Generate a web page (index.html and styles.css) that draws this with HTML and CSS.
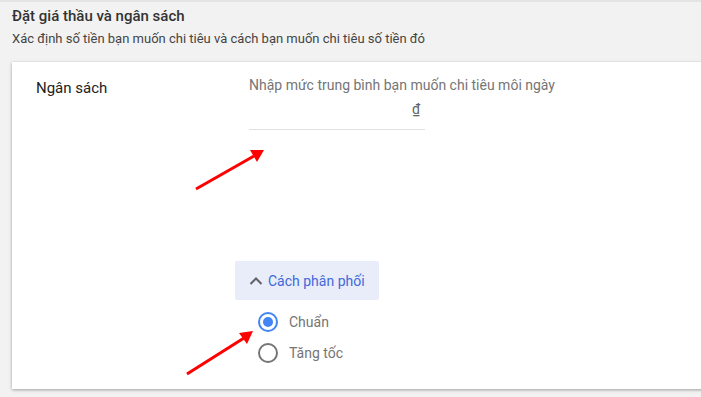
FILE: index.html
```html
<html lang="vi">
    <head>
        <title>Đặt giá thầu và ngân sách</title>
        <link rel="stylesheet" href="styles.css">
    </head>
    <body>
        <div id="page">
            <div class="header">
                <h1>Đặt giá thầu và ngân sách</h1>
                <p>Xác định số tiền bạn muốn chi tiêu và cách bạn muốn chi tiêu số tiền đó</p>
            </div>

            <div class="card">
                <div class="label">Ngân sách</div>
                <div class="field">
                    <div class="hint">Nhập mức trung bình bạn muốn chi tiêu môi ngày</div>
                    <div class="money"><span class="currency">₫</span></div>

                    <div class="delivery">
                        <button class="toggle">
                            <svg width="14" height="14" viewBox="0 0 14 14"><polyline points="1.5,10 7,4.5 12.5,10" fill="none" stroke="#5f6368" stroke-width="2"/></svg>
                            Cách phân phối
                        </button>
                        <div class="options">
                            <label class="radio"><span class="dot checked"></span>Chuẩn</label>
                            <label class="radio"><span class="dot"></span>Tăng tốc</label>
                        </div>
                    </div>
                </div>
            </div>

            <!-- arrows drawn over the screenshot -->
            <svg class="arrows" width="701" height="397">
                <line x1="196" y1="189" x2="254" y2="156" stroke="#ff0000" stroke-width="3"/>
                <polygon points="264,150 250,150 257,162" fill="#ff0000"/>
                <line x1="187" y1="374" x2="244" y2="338" stroke="#ff0000" stroke-width="3"/>
                <polygon points="253,331 239,333 247,344" fill="#ff0000"/>
            </svg>
        </div>
    </body>
</html>
```
FILE: styles.css
```css
body{
    margin:0;
    background:#f2f2f2;
    font-family: Roboto, "Noto Sans", sans-serif;
    overflow:hidden;
}
#page{
    position:relative;
    height:397px;
    border-top:2px solid #e4e4e4;
}
.header{
    padding:4px 12px 0;
    height:56px;
}
h1{
    font-size:15px;
    font-weight:500;
    color:#333;
    margin:0;
    line-height:20px;
}
.header p{
    font-size:13px;
    color:#444;
    margin:4px 0 0;
    line-height:18px;
}
.card{
    margin-left:12px;
    width:720px;
    height:327px;
    background:#fff;
    box-shadow:0 1px 3px rgba(0,0,0,.35);
    display:flex;
}
.label{
    width:213px;
    padding:16px 0 0 24px;
    font-size:15px;
    color:#212121;
    line-height:20px;
}
.field{
    padding-top:14px;
}
.hint{
    font-size:14px;
    color:#757575;
    line-height:18px;
}
.money{
    width:176px;
    height:36px;
    border-bottom:1px solid #e0e0e0;
    text-align:right;
    box-sizing:border-box;
    padding:7px 5px 0 0;
}
.currency{
    font-size:14px;
    color:#616161;
    text-decoration:underline;
}
.delivery{
    margin:131px 0 0 -14px;
}
.toggle{
    display:flex;
    align-items:center;
    gap:5px;
    width:144px;
    height:39px;
    padding:0 0 0 14px;
    border:none;
    border-radius:2px;
    background:#e8edf9;
    color:#4169d9;
    font-family: Roboto, sans-serif;
    font-size:14px;
}
.options{
    padding:6px 0 0 23px;
}
.radio{
    display:flex;
    align-items:center;
    gap:11px;
    height:31px;
    font-size:14px;
    color:#757575;
}
.dot{
    width:16px;
    height:16px;
    border:2px solid #757575;
    border-radius:50%;
    position:relative;
}
.dot.checked{
    border-color:#4285f4;
}
.dot.checked::after{
    content:"";
    position:absolute;
    left:3px;
    top:3px;
    width:10px;
    height:10px;
    border-radius:50%;
    background:#4285f4;
}
.arrows{
    position:absolute;
    left:0;
    top:-2px;
}
```
